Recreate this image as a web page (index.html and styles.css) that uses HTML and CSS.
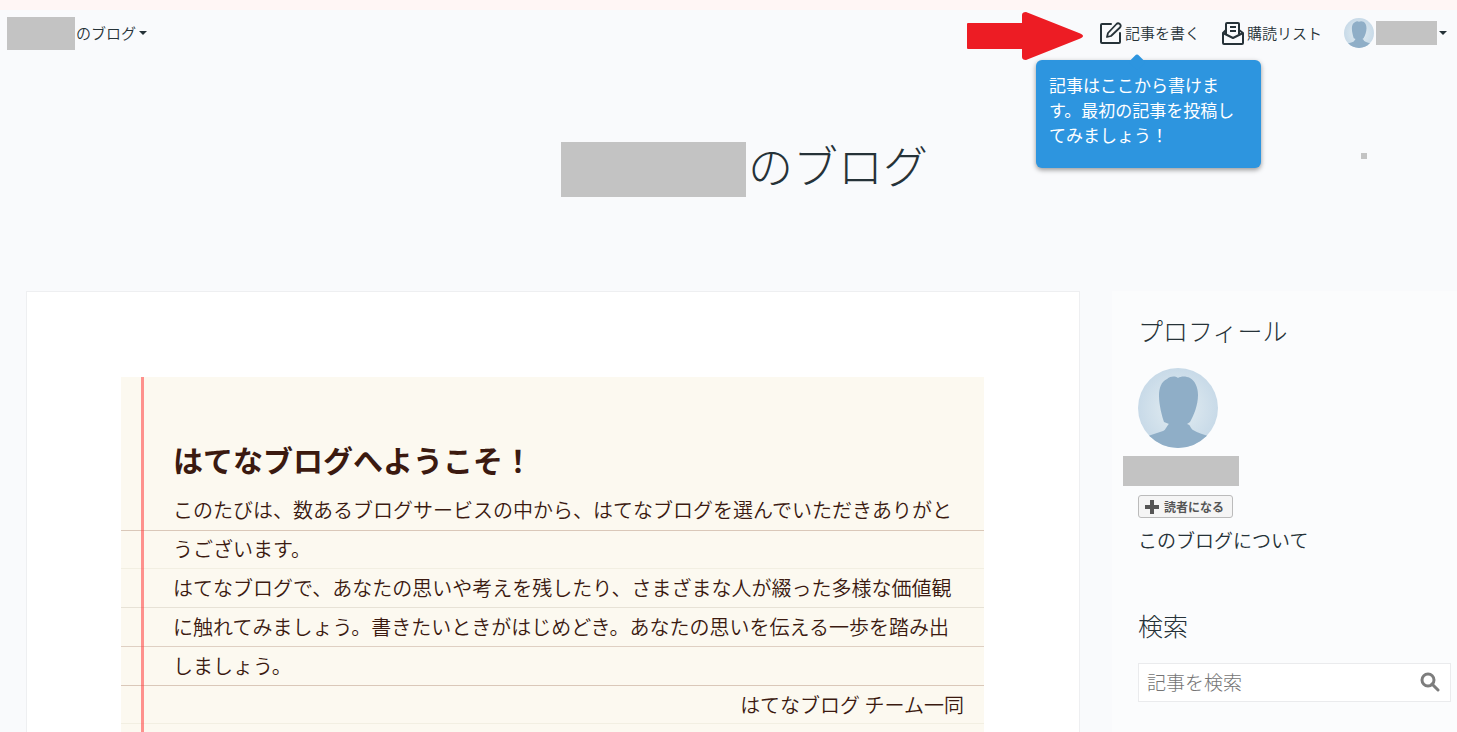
FILE: index.html
```
<!DOCTYPE html>
<html lang="ja">

<head>
  <meta charset="UTF-8" />
  <meta name="viewport" content="width=device-width, initial-scale=1.0" />
  <title>のブログ</title>
  <link rel="stylesheet" href="styles.css">
</head>

<body>
  <svg class="defs" width="0" height="0" aria-hidden="true">
    <defs>
      <radialGradient id="avatarBg">
        <stop offset="0.4" stop-color="#d9e6ee" />
        <stop offset="1" stop-color="#c8dae8" />
      </radialGradient>
      <clipPath id="avatarClip"><circle cx="40" cy="40" r="40" /></clipPath>
      <symbol id="avatar" viewBox="0 0 80 80">
        <circle cx="40" cy="40" r="40" fill="url(#avatarBg)" />
        <path clip-path="url(#avatarClip)" fill="#8faec7" d="M40 10C37 8 33 8 29 11C23 14 21 20 21 28C21 37 24 48 26 54L31 56C29 57 28 62 25 63C20 65 15 66 10 68L10 80H70V68C65 66 60 65 55 62C52 60 53 57 49 56L52 54C56 47 60 37 60 27C60 19 57 13 52 10C48 8 43 8 40 10Z" />
      </symbol>
    </defs>
  </svg>

  <div class="notice"></div>

  <header class="globalheader">
    <a href="#" class="blog-name">
      <span class="mask mask-blog"></span>
      <span>のブログ</span>
      <span class="caret"></span>
    </a>

    <nav class="menu">
      <div class="write">
        <svg class="arrow" width="117" height="48" viewBox="0 0 117 48" aria-hidden="true">
          <path fill="#ed1c24" d="M1 11H55V3Q55 0 59 0L112 21Q120 24 112 27L59 48Q55 48 55 45V37H1Q0 37 0 36V12Q0 11 1 11Z" />
        </svg>
        <a href="#" class="menu-link">
          <svg width="22" height="22" viewBox="0 0 22 22" fill="none" stroke="#263238" stroke-width="2" stroke-linejoin="round" stroke-linecap="round" aria-hidden="true">
            <path d="M11 2H2C1.400 2 1 2.400 1 3V20C1 20.600 1.400 21 2 21H19C19.600 21 20 20.600 20 20V11" />
            <path stroke-width="1.800" d="M7 15L8 11L16.500 2Q18 0.500 19.800 2Q21.500 3.500 20 5.500L11 14Z" />
          </svg>
          記事を書く
        </a>
        <div class="tooltip" role="tooltip">記事はここから書けます。最初の記事を投稿してみましょう！</div>
      </div>
      <a href="#" class="menu-link">
        <svg width="22" height="24" viewBox="0 0 22 24" fill="none" stroke="#263238" stroke-width="2" stroke-linejoin="round" aria-hidden="true">
          <path d="M4 13V3C4 2.400 4.400 2 5 2H16C16.600 2 17 2.400 17 3V13" />
          <path d="M8 6H14M8 10H14" />
          <path d="M4 9L1 12V22C1 22.600 1.400 23 2 23H20C20.600 23 21 22.600 21 22V12L17 9" />
          <path d="M1 12L11 17L21 12" />
        </svg>
        購読リスト
      </a>
      <a href="#" class="user" aria-label="ユーザーメニュー">
        <svg width="30" height="30" aria-hidden="true"><use href="#avatar" /></svg>
        <span class="mask mask-user"></span>
        <span class="caret"></span>
      </a>
    </nav>
  </header>

  <div class="blog-title">
    <h1><span class="mask mask-title"></span><span class="title-text">のブログ</span></h1>
    <span class="mask dot"></span>
  </div>

  <div class="content">
    <main class="entry">
      <article class="note">
        <h2>はてなブログへようこそ！</h2>
        <div class="note-body">
          <p>このたびは、数あるブログサービスの中から、はてなブログを選んでいただきありがとうございます。</p>
          <p>はてなブログで、あなたの思いや考えを残したり、さまざまな人が綴った多様な価値観に触れてみましょう。書きたいときがはじめどき。あなたの思いを伝える一歩を踏み出しましょう。</p>
          <p class="signature">はてなブログ チーム一同</p>
        </div>
      </article>
    </main>

    <aside class="sidebar">
      <section class="profile">
        <h2>プロフィール</h2>
        <svg class="profile-icon" width="80" height="80" aria-hidden="true"><use href="#avatar" /></svg>
        <span class="mask mask-profile"></span>
        <button type="button" class="subscribe">
          <svg width="14" height="14" viewBox="0 0 14 14" aria-hidden="true"><path d="M7 0V14M0 7H14" stroke="#555" stroke-width="4" /></svg>
          読者になる
        </button>
        <a href="#" class="about">このブログについて</a>
      </section>

      <section class="search">
        <h2><label for="q">検索</label></h2>
        <form class="search-form">
          <input type="text" id="q" placeholder="記事を検索" />
          <button type="submit" aria-label="検索">
            <svg width="20" height="20" viewBox="0 0 20 20" fill="none" stroke="#7d7d7d" stroke-width="3" aria-hidden="true">
              <circle cx="8" cy="8" r="6" />
              <path d="M12 12L18 18" stroke-linecap="round" />
            </svg>
          </button>
        </form>
      </section>
    </aside>
  </div>
</body>

</html>
```
FILE: styles.css
```
:root {
  --color-fondo: #f9fafc;
  --color-texto: #263238;
  --color-nota: #3b1a10;
  --color-mask: #c3c3c3;
  --color-tooltip: #2d95df;
  --color-borde: #eeeff1;
}

* {
  box-sizing: border-box;
}

body {
  margin: 0;
  font-family: "Noto Sans CJK JP", sans-serif;
  font-weight: 350;
  background-color: var(--color-fondo);
  color: var(--color-texto);
}

a {
  color: inherit;
  text-decoration: none;
}

h1, h2, p {
  margin: 0;
  font-weight: 300;
}

p {
  font-weight: 350;
}

svg {
  flex: none;
}

.defs {
  position: absolute;
}

.notice {
  height: 10px;
  background: #fff6f5;
}

.mask {
  display: block;
  flex: none;
  background: var(--color-mask);
}

.caret {
  border: 4px solid transparent;
  border-top-color: var(--color-texto);
  border-bottom: 0;
}

/* header */
.globalheader {
  display: flex;
  justify-content: space-between;
  align-items: center;
  height: 46px;
  padding: 0 10px 0 7px;
  font-size: 15px;
  line-height: 24px;
}

.blog-name {
  display: flex;
  align-items: center;
}

.mask-blog {
  width: 68px;
  height: 33px;
  margin-right: 1px;
}

.blog-name .caret {
  margin-left: 3px;
}

.menu {
  display: flex;
  align-items: center;
  gap: 22px;
}

.menu-link {
  display: flex;
  align-items: center;
  gap: 3px;
}

.write {
  position: relative;
}

.arrow {
  position: absolute;
  top: -9px;
  right: 100%;
  margin-right: 16px;
}

.user {
  display: flex;
  align-items: center;
  gap: 2px;
}

.mask-user {
  width: 61px;
  height: 24px;
}

.tooltip {
  position: absolute;
  top: 39px;
  left: -64px;
  z-index: 1;
  width: 225px;
  height: 108px;
  padding: 12px 13px;
  border-radius: 6px;
  background: var(--color-tooltip);
  box-shadow: 0 2px 5px rgba(0, 0, 0, 0.4);
  color: #fff;
  font-size: 17px;
  font-weight: 400;
  line-height: 25px;
}

.tooltip::before {
  content: "";
  position: absolute;
  top: -4px;
  left: 95px;
  width: 12px;
  height: 12px;
  border-radius: 3px;
  background: var(--color-tooltip);
  transform: rotate(45deg);
}

/* title */
.blog-title {
  position: relative;
  padding: 86px 0 94px 32px;
}

.blog-title h1 {
  display: flex;
  justify-content: center;
  gap: 2px;
  font-size: 45px;
  line-height: 45px;
}

.mask-title {
  width: 185px;
  height: 55px;
}

.dot {
  position: absolute;
  top: 97px;
  right: 90px;
  width: 6px;
  height: 6px;
}

/* content */
.content {
  display: flex;
  gap: 32px;
  padding-left: 26px;
}

.entry {
  flex: 1;
  min-width: 0;
  padding: 85px 95px 85px 94px;
  border: 1px solid var(--color-borde);
  background: #fff;
}

.note {
  position: relative;
  padding-top: 63px;
  background: #fcf9f0;
  color: var(--color-nota);
}

/* margin line of the paper */
.note::before {
  content: "";
  position: absolute;
  top: 0;
  bottom: 0;
  left: 20px;
  width: 3px;
  background: rgba(255, 60, 60, 0.55);
}

.note h2 {
  padding: 0 52px;
  font-size: 30px;
  font-weight: 700;
  line-height: 39px;
}

.note-body {
  margin-top: 11px;
  padding: 0 20px 39px 52px;
  font-size: 20px;
  line-height: 39px;
  background: repeating-linear-gradient(
    transparent 0 38px, #dac8b9 38px 39px,
    transparent 39px 76px, #f2efe2 76px 77px,
    transparent 77px 115px, #e7e2d6 115px 116px,
    transparent 116px 154px, #dfd0c3 154px 155px) 0 2px no-repeat;
}

.signature {
  text-align: right;
}

/* sidebar */
.sidebar {
  width: 345px;
  padding: 20px 6px 40px 26px;
  background: #fbfcfd;
}

.sidebar h2 {
  font-size: 25px;
  line-height: 38px;
}

.profile {
  display: flex;
  flex-direction: column;
  align-items: flex-start;
}

.profile-icon {
  margin-top: 19px;
}

.mask-profile {
  width: 116px;
  height: 30px;
  margin: 8px 0 9px -15px;
}

.subscribe {
  display: flex;
  align-items: center;
  gap: 5px;
  height: 23px;
  padding: 0 8px 0 6px;
  border: 1px solid #bbb;
  border-radius: 3px;
  background: #f5f5f5;
  color: #555;
  font-family: inherit;
  font-size: 12px;
  font-weight: 700;
  cursor: pointer;
}

.about {
  margin-top: 7px;
  font-size: 19px;
  line-height: 30px;
}

.search {
  margin-top: 51px;
}

.search-form {
  display: flex;
  align-items: center;
  margin-top: 19px;
  height: 39px;
  padding: 0 10px 2px 8px;
  border: 1px solid #eaebed;
  background: #fff;
}

.search-form input {
  flex: 1;
  min-width: 0;
  padding: 0;
  border: none;
  outline: none;
  background: none;
  font-family: inherit;
  font-size: 19px;
  font-weight: 300;
}

.search-form input::placeholder {
  color: #757575;
}

.search-form button {
  display: flex;
  padding: 0;
  border: none;
  background: none;
  cursor: pointer;
}
```
